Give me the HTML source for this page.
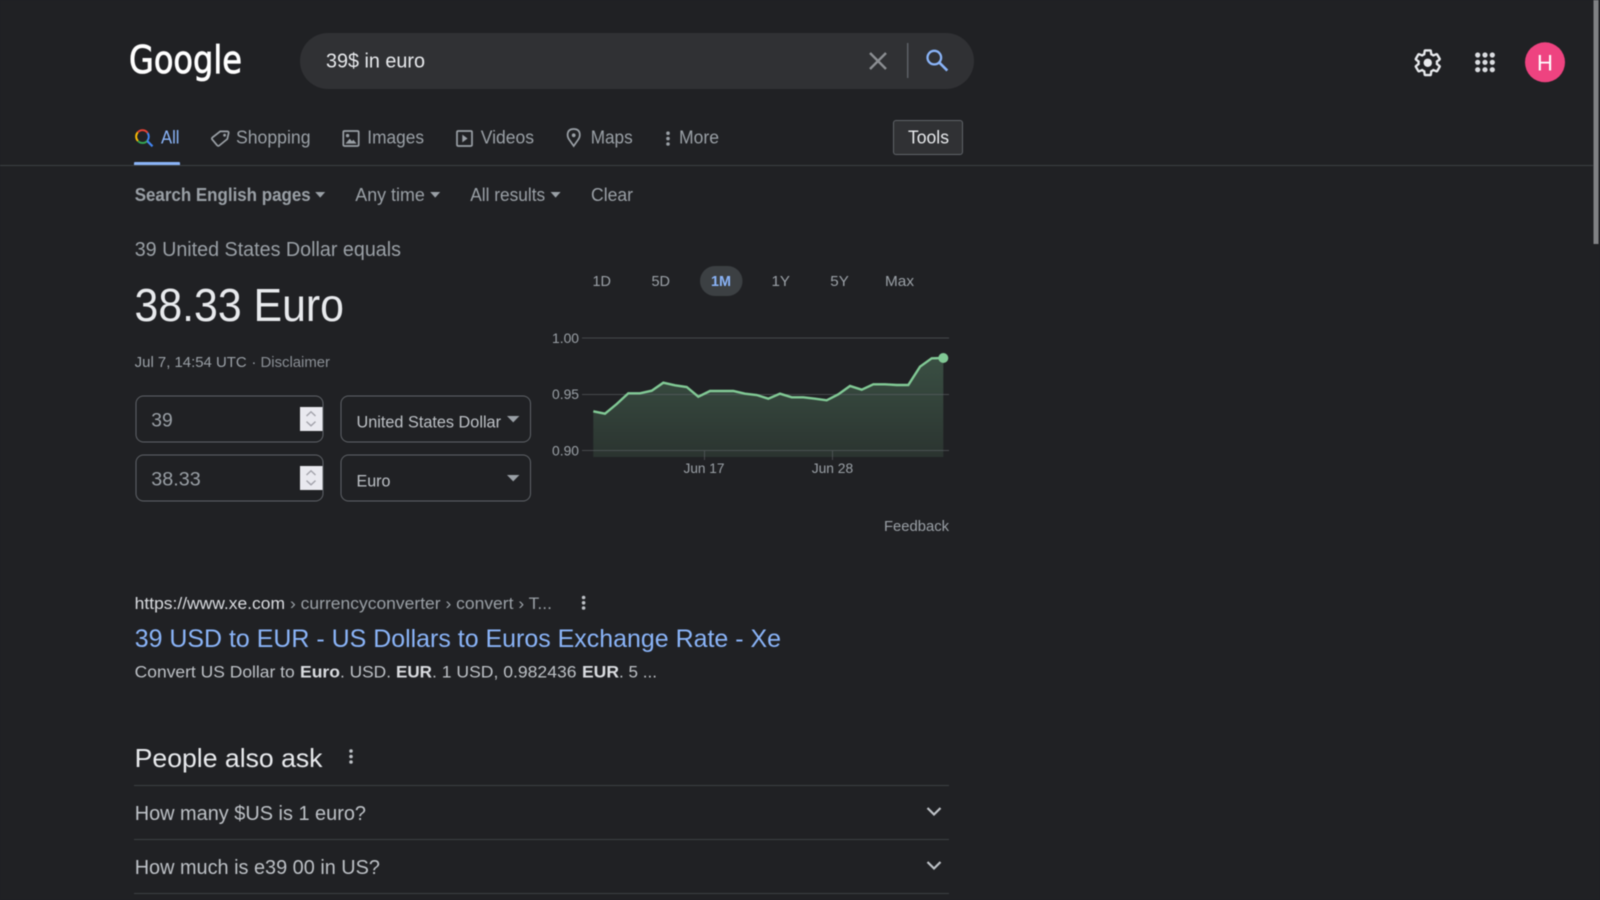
<!DOCTYPE html>
<html lang="en">
<head>
<meta charset="utf-8">
<title>39$ in euro - Google Search</title>
<style>
html,body{margin:0;padding:0;background:#202124;width:1600px;height:900px;overflow:hidden}
svg{display:block;position:absolute;left:0;top:0;filter:blur(.4px)}
text{font-family:"Liberation Sans",Arial,sans-serif;white-space:pre}
</style>
</head>
<body>
<svg width="1600" height="900" viewBox="0 0 1600 900" xmlns="http://www.w3.org/2000/svg">
<defs>
<linearGradient id="ar" x1="0" y1="0" x2="0" y2="1"><stop offset="0" stop-color="#3a4f43"/><stop offset="1" stop-color="#2b3430"/></linearGradient>
</defs>
<rect width="1600" height="900" fill="#202124"/>

<!-- scrollbar -->
<rect x="1593.5" y="0" width="5" height="244" fill="#808184"/>

<!-- logo -->
<text x="129" y="73" font-size="38" fill="#fff" stroke="#fff" stroke-width=".8" style="font-family:'DejaVu Sans',sans-serif" textLength="113" lengthAdjust="spacingAndGlyphs">Google</text>

<!-- search box -->
<rect x="300" y="33" width="674" height="56" rx="28" fill="#303134"/>
<text x="326" y="67.5" font-size="20" fill="#e8eaed" textLength="99" lengthAdjust="spacingAndGlyphs">39$ in euro</text>
<path d="M870 53L886 69M886 53L870 69" stroke="#8b8e92" stroke-width="2.4" fill="none"/>
<rect x="907" y="43" width="1.4" height="35" fill="#5f6368"/>
<circle cx="934.3" cy="57.6" r="6.8" fill="none" stroke="#8ab4f8" stroke-width="2.3"/>
<path d="M939.3 62.6L947.3 70.6" stroke="#8ab4f8" stroke-width="2.6" fill="none"/>

<!-- right icons -->
<g transform="translate(1413 48) scale(1.23)"><path d="M19.43 12.98c.04-.32.07-.64.07-.98 0-.34-.03-.66-.07-.98l2.11-1.65c.19-.15.24-.42.12-.64l-2-3.46c-.09-.16-.26-.25-.44-.25-.06 0-.12.01-.17.03l-2.49 1c-.52-.4-1.08-.73-1.69-.98l-.38-2.65C14.46 2.18 14.25 2 14 2h-4c-.25 0-.46.18-.49.42l-.38 2.65c-.61.25-1.17.59-1.69.98l-2.49-1c-.06-.02-.12-.03-.18-.03-.17 0-.34.09-.43.25l-2 3.46c-.13.22-.07.49.12.64l2.11 1.65c-.04.32-.07.65-.07.98 0 .33.03.66.07.98l-2.11 1.65c-.19.15-.24.42-.12.64l2 3.46c.09.16.26.25.44.25.06 0 .12-.01.17-.03l2.49-1c.52.4 1.08.73 1.69.98l.38 2.65c.03.24.24.42.49.42h4c.25 0 .46-.18.49-.42l.38-2.65c.61-.25 1.17-.59 1.69-.98l2.49 1c.06.02.12.03.18.03.17 0 .34-.09.43-.25l2-3.46c.12-.22.07-.49-.12-.64l-2.11-1.65z" fill="none" stroke="#e8eaed" stroke-width="1.9"/><circle cx="12" cy="12" r="3.4" fill="#e8eaed"/></g>
<g fill="#dadce0">
<circle cx="1477.7" cy="55" r="2.6"/><circle cx="1485" cy="55" r="2.6"/><circle cx="1492.3" cy="55" r="2.6"/>
<circle cx="1477.7" cy="62.3" r="2.6"/><circle cx="1485" cy="62.3" r="2.6"/><circle cx="1492.3" cy="62.3" r="2.6"/>
<circle cx="1477.7" cy="69.7" r="2.6"/><circle cx="1485" cy="69.7" r="2.6"/><circle cx="1492.3" cy="69.7" r="2.6"/>
</g>
<circle cx="1545" cy="62.3" r="20" fill="#ee4380"/>
<text x="1545" y="70.5" font-size="22" fill="#fff" text-anchor="middle">H</text>

<!-- tabs -->
<g fill="none" stroke-width="1.9">
<path d="M137.8 132.3A6.2 6.2 0 0 1 147.6 133" stroke="#ea4335"/>
<path d="M137.8 132.3A6.2 6.2 0 0 0 138 141" stroke="#fbbc05"/>
<path d="M138 141A6.2 6.2 0 0 0 147.4 140.6" stroke="#34a853"/>
<path d="M147.6 133A6.2 6.2 0 0 1 147.4 140.6" stroke="#4285f4"/>
<path d="M147.2 141L152.5 146.3" stroke="#4285f4" stroke-width="2.2"/>
</g>
<text x="161" y="143.5" font-size="18" fill="#8ab4f8" textLength="18.5" lengthAdjust="spacingAndGlyphs">All</text>
<rect x="134" y="162" width="46" height="4" rx="1" fill="#8ab4f8"/>
<rect x="0" y="165" width="1593" height="1" fill="#3c4043"/>

<g fill="none" stroke="#9aa0a6" stroke-width="1.7">
<path d="M212.3 137.6L220.2 131.4H227.3Q229 131.4 228.6 133.2L227.3 139L219.2 145.6Q218 146.4 217.2 145.4L212 139.2Q211.6 138.2 212.3 137.6Z"/>
<rect x="343.3" y="131" width="15.4" height="15" rx="1.2"/>
<rect x="457" y="131" width="15" height="15" rx="1.2"/>
<path d="M573.7 146L569.2 139.6Q567.6 137.4 567.6 135Q567.6 129 573.7 129Q579.8 129 579.8 135Q579.8 137.4 578.2 139.6Z"/>
</g>
<circle cx="224.6" cy="135.2" r="1.4" fill="#9aa0a6"/>
<circle cx="347.6" cy="135.6" r="1.7" fill="#9aa0a6"/>
<path d="M345.5 143.6L349.7 138.8L352 141.2L353.4 139.8L356.6 143.6Z" fill="#9aa0a6"/>
<path d="M462.3 134.6L467.6 138.5L462.3 142.4Z" fill="#9aa0a6"/>
<circle cx="573.7" cy="135.3" r="1.9" fill="#9aa0a6"/>
<g fill="#9aa0a6"><circle cx="668" cy="133.2" r="1.8"/><circle cx="668" cy="138.6" r="1.8"/><circle cx="668" cy="144" r="1.8"/></g>

<g font-size="18" fill="#9aa0a6">
<text x="236" y="143.5" textLength="74.5" lengthAdjust="spacingAndGlyphs">Shopping</text>
<text x="367.3" y="143.5" textLength="56.7" lengthAdjust="spacingAndGlyphs">Images</text>
<text x="480.7" y="143.5" textLength="53.3" lengthAdjust="spacingAndGlyphs">Videos</text>
<text x="590.7" y="143.5" textLength="42" lengthAdjust="spacingAndGlyphs">Maps</text>
<text x="679" y="143.5" textLength="40" lengthAdjust="spacingAndGlyphs">More</text>
</g>
<rect x="893.5" y="120.5" width="69" height="34" rx="2.5" fill="#303134" stroke="#5f6368"/>
<text x="908" y="143.5" font-size="18" fill="#e8eaed" textLength="41" lengthAdjust="spacingAndGlyphs">Tools</text>

<!-- filters -->
<g font-size="18" fill="#9aa0a6">
<text x="134.7" y="201" font-weight="700" textLength="176" lengthAdjust="spacingAndGlyphs">Search English pages</text>
<text x="355.3" y="201" textLength="69.5" lengthAdjust="spacingAndGlyphs">Any time</text>
<text x="470.2" y="201" textLength="75" lengthAdjust="spacingAndGlyphs">All results</text>
<text x="591" y="201" textLength="42" lengthAdjust="spacingAndGlyphs">Clear</text>
<path d="M315.2 192H325.2L320.2 197.6Z"/>
<path d="M430.2 192H440.2L435.2 197.6Z"/>
<path d="M550.6 192H560.6L555.6 197.6Z"/>
</g>

<!-- conversion -->
<text x="134.7" y="256" font-size="20" fill="#9aa0a6" textLength="266.3" lengthAdjust="spacingAndGlyphs">39 United States Dollar equals</text>
<text x="134.5" y="321" font-size="46" fill="#e8eaed" textLength="209.5" lengthAdjust="spacingAndGlyphs">38.33 Euro</text>
<text x="134.7" y="367" font-size="14.5" fill="#9aa0a6" textLength="112" lengthAdjust="spacingAndGlyphs">Jul 7, 14:54 UTC</text>
<text x="251.5" y="367" font-size="14.5" fill="#9aa0a6">·</text>
<text x="260.5" y="367" font-size="14.5" fill="#8a8f95" textLength="69.5" lengthAdjust="spacingAndGlyphs">Disclaimer</text>

<g fill="none" stroke="#5f6368">
<rect x="136" y="396" width="187" height="46" rx="7.5"/>
<rect x="136" y="455" width="187" height="46" rx="7.5"/>
<rect x="341" y="396" width="189.5" height="46" rx="7.5"/>
<rect x="341" y="455" width="189.5" height="46" rx="7.5"/>
</g>
<text x="151.3" y="426.5" font-size="19" fill="#9aa0a6" textLength="21.5" lengthAdjust="spacingAndGlyphs">39</text>
<text x="151.3" y="485.5" font-size="19" fill="#9aa0a6" textLength="49.5" lengthAdjust="spacingAndGlyphs">38.33</text>

<rect x="300" y="407" width="22.5" height="24" fill="#e9e9ef"/>
<rect x="300" y="466" width="22.5" height="24" fill="#e9e9ef"/>
<g fill="none" stroke="#a2a2aa" stroke-width="1.4">
<path d="M306.5 416L311 411.8L315.5 416M306.5 421.6L311 425.8L315.5 421.6"/>
<path d="M306.5 475L311 470.8L315.5 475M306.5 480.6L311 484.8L315.5 480.6"/>
</g>

<text x="356.5" y="427.5" font-size="17" fill="#bdc1c6" textLength="144.5" lengthAdjust="spacingAndGlyphs">United States Dollar</text>
<text x="356.5" y="486.5" font-size="17" fill="#bdc1c6" textLength="34" lengthAdjust="spacingAndGlyphs">Euro</text>
<path d="M507 416H519.4L513.2 422.4Z" fill="#9aa0a6"/>
<path d="M507 475H519.4L513.2 481.4Z" fill="#9aa0a6"/>

<!-- chart range -->
<rect x="700" y="266" width="42.5" height="30" rx="15" fill="#3c4043"/>
<g font-size="15" fill="#9aa0a6">
<text x="592.5" y="286" textLength="18.5" lengthAdjust="spacingAndGlyphs">1D</text>
<text x="651.5" y="286" textLength="18.5" lengthAdjust="spacingAndGlyphs">5D</text>
<text x="711" y="286" font-weight="700" fill="#8ab4f8" textLength="20" lengthAdjust="spacingAndGlyphs">1M</text>
<text x="771.5" y="286" textLength="18.5" lengthAdjust="spacingAndGlyphs">1Y</text>
<text x="830.3" y="286" textLength="18.5" lengthAdjust="spacingAndGlyphs">5Y</text>
<text x="885" y="286" textLength="29" lengthAdjust="spacingAndGlyphs">Max</text>
</g>

<!-- chart -->
<path d="M593.3 411.3L605 413.7L616.7 404L628.3 393.3L640 393.3L651.7 390.7L663.3 382.7L675 385.3L686.7 387L698.3 396.7L710 391L721.7 391L733.3 391L745 393.7L756.7 395L768.3 398.7L780 393.7L791.7 397.3L803.3 397.3L815 398.7L826.7 400.3L838.3 394.3L850 386L861.7 389.7L873.3 384.3L885 384.3L896.7 385L908.3 385L920 366.7L931.7 358.3L943.3 358V457H593.3Z" fill="url(#ar)"/>
<g fill="#5f6368" opacity=".6">
<rect x="582" y="337.5" width="367" height="1"/>
<rect x="582" y="394" width="367" height="1"/>
<rect x="582" y="450" width="367" height="1"/>
<rect x="704" y="450" width="1" height="10"/>
<rect x="832" y="450" width="1" height="10"/>
</g>
<path d="M593.3 411.3L605 413.7L616.7 404L628.3 393.3L640 393.3L651.7 390.7L663.3 382.7L675 385.3L686.7 387L698.3 396.7L710 391L721.7 391L733.3 391L745 393.7L756.7 395L768.3 398.7L780 393.7L791.7 397.3L803.3 397.3L815 398.7L826.7 400.3L838.3 394.3L850 386L861.7 389.7L873.3 384.3L885 384.3L896.7 385L908.3 385L920 366.7L931.7 358.3L943.3 358" fill="none" stroke="#81c995" stroke-width="2.4"/>
<circle cx="943.3" cy="358" r="5" fill="#81c995"/>
<g font-size="14" fill="#9aa0a6">
<text x="552" y="343" textLength="27" lengthAdjust="spacingAndGlyphs">1.00</text>
<text x="552" y="399" textLength="27" lengthAdjust="spacingAndGlyphs">0.95</text>
<text x="552" y="455.5" textLength="27" lengthAdjust="spacingAndGlyphs">0.90</text>
<text x="683.5" y="473" textLength="41" lengthAdjust="spacingAndGlyphs">Jun 17</text>
<text x="811.7" y="473" textLength="41.5" lengthAdjust="spacingAndGlyphs">Jun 28</text>
</g>
<text x="884" y="531" font-size="15" fill="#9aa0a6" textLength="65" lengthAdjust="spacingAndGlyphs">Feedback</text>

<!-- result -->
<text x="134.7" y="609" font-size="17" fill="#dadce0" textLength="150.3" lengthAdjust="spacingAndGlyphs">https://www.xe.com</text>
<text x="290" y="609" font-size="17" fill="#9aa0a6" textLength="262" lengthAdjust="spacingAndGlyphs">› currencyconverter › convert › T...</text>
<g fill="#bdc1c6"><circle cx="583.6" cy="597.5" r="1.8"/><circle cx="583.6" cy="602.8" r="1.8"/><circle cx="583.6" cy="608" r="1.8"/></g>
<text x="134.7" y="647" font-size="25" fill="#8ab4f8" textLength="646.3" lengthAdjust="spacingAndGlyphs">39 USD to EUR - US Dollars to Euros Exchange Rate - Xe</text>
<g font-size="17" fill="#bdc1c6">
<text x="134.7" y="677.5" textLength="160" lengthAdjust="spacingAndGlyphs">Convert US Dollar to</text>
<text x="300" y="677.5" font-weight="700" fill="#dadce0" textLength="40" lengthAdjust="spacingAndGlyphs">Euro</text>
<text x="340" y="677.5" textLength="51" lengthAdjust="spacingAndGlyphs">. USD.</text>
<text x="396" y="677.5" font-weight="700" fill="#dadce0" textLength="36" lengthAdjust="spacingAndGlyphs">EUR</text>
<text x="432" y="677.5" textLength="144.5" lengthAdjust="spacingAndGlyphs">. 1 USD, 0.982436</text>
<text x="582" y="677.5" font-weight="700" fill="#dadce0" textLength="37" lengthAdjust="spacingAndGlyphs">EUR</text>
<text x="619" y="677.5" textLength="38" lengthAdjust="spacingAndGlyphs">. 5 ...</text>
</g>

<!-- people also ask -->
<text x="134.7" y="767" font-size="26" fill="#e8eaed" textLength="187.8" lengthAdjust="spacingAndGlyphs">People also ask</text>
<g fill="#bdc1c6"><circle cx="351" cy="751" r="1.8"/><circle cx="351" cy="756.5" r="1.8"/><circle cx="351" cy="762" r="1.8"/></g>
<g fill="#3c4043">
<rect x="134" y="785" width="815" height="1"/>
<rect x="134" y="839" width="815" height="1"/>
<rect x="134" y="893" width="815" height="1"/>
</g>
<text x="134.7" y="820" font-size="20" fill="#bdc1c6" textLength="231.3" lengthAdjust="spacingAndGlyphs">How many $US is 1 euro?</text>
<text x="134.7" y="874" font-size="20" fill="#bdc1c6" textLength="245.3" lengthAdjust="spacingAndGlyphs">How much is e39 00 in US?</text>
<g fill="none" stroke="#bdc1c6" stroke-width="2.2">
<path d="M927.5 808L934 814.5L940.5 808"/>
<path d="M927.5 862L934 868.5L940.5 862"/>
</g>
</svg>
</body>
</html>
